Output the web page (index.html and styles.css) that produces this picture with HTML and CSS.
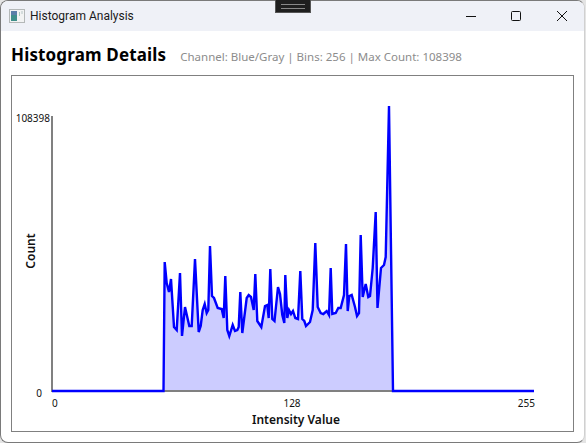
FILE: index.html
```html
<!DOCTYPE html>
<html lang="en">
<head>
  <meta charset="UTF-8">
  <title>Histogram Analysis</title>
  <link rel="stylesheet" href="styles.css">
</head>
<body>
  <div class="window">
    <div class="titlebar">
      <svg class="app-icon" width="16" height="14" viewBox="0 0 16 14">
        <rect x="0.5" y="0.5" width="15" height="13" fill="#f2f3f3" stroke="#b4b8b8"/>
        <rect x="2" y="2" width="6" height="10" fill="#3f8f8a"/>
        <rect x="2" y="2" width="6" height="4" fill="#5a7fa8"/>
        <rect x="10" y="3" width="1" height="4" fill="#a8c8b8"/>
        <rect x="12" y="2" width="2" height="3" fill="#d4dcdc"/>
      </svg>
      <span class="title">Histogram Analysis</span>
      <div class="controls">
        <button class="ctl">
          <svg width="12" height="12" viewBox="0 0 12 12"><path d="M1 6.5h10" stroke="#111" fill="none"/></svg>
        </button>
        <button class="ctl">
          <svg width="12" height="12" viewBox="0 0 12 12"><rect x="1.5" y="1.5" width="9" height="9" rx="1" stroke="#111" fill="none"/></svg>
        </button>
        <button class="ctl">
          <svg width="12" height="12" viewBox="0 0 12 12"><path d="M1 1l10 10M11 1L1 11" stroke="#111" fill="none"/></svg>
        </button>
      </div>
    </div>
    <div class="content">
      <div class="heading">
        <h1>Histogram Details</h1>
        <span class="info">Channel: Blue/Gray | Bins: 256 | Max Count: 108398</span>
      </div>
      <div class="chart-frame">
        <svg class="chart" viewBox="12 76 561 355" width="561" height="355">
          <polygon class="area" points="163.5,391 164.7,262 166.7,283 169,292 171,279 174,327 176.7,330 180,273 182,336 185,307 189.3,326 191.7,326 195,259 198.7,332 200.7,326 202.7,310 204.7,304 206.7,313 208.3,310 210,246 212,296 214,298 217.7,308 221.7,309 223.7,318 225.3,276 227.3,330 229.3,336 232.7,325 235,331 237.3,330 238.7,327 240.3,292 242.3,333 246.7,298 248.7,295 251,297 253.7,310 255.3,274 257.3,321 261.3,327 265,306 267.3,305 268.7,318 270.3,269 272.3,319 274.5,321 278,287 280,294 282.3,315 284.3,323 285.3,275 287.3,318 289,310 291,314 293,311 295.3,318 298,319 300.3,271 302.3,319 304.3,321 306,326 310,322 312.7,310 315.3,243 317.7,307 320.7,313 323.3,314 326.7,311 329,315 330.7,268 332.3,314 335.7,313 338.3,308 340.7,308 344,295 346,244 347.7,311 349.3,296 351.7,295 355,307 357,316 359,313 360.7,235 362.7,297 365.7,284 368.3,297 370,296 372.7,268 375.7,212 377.5,308 381,268 384,265 385.7,257 389,106 393,391"/>
          <path class="axis" d="M52 116V391H534"/>
          <polyline class="line" points="52,391 163.5,391 164.7,262 166.7,283 169,292 171,279 174,327 176.7,330 180,273 182,336 185,307 189.3,326 191.7,326 195,259 198.7,332 200.7,326 202.7,310 204.7,304 206.7,313 208.3,310 210,246 212,296 214,298 217.7,308 221.7,309 223.7,318 225.3,276 227.3,330 229.3,336 232.7,325 235,331 237.3,330 238.7,327 240.3,292 242.3,333 246.7,298 248.7,295 251,297 253.7,310 255.3,274 257.3,321 261.3,327 265,306 267.3,305 268.7,318 270.3,269 272.3,319 274.5,321 278,287 280,294 282.3,315 284.3,323 285.3,275 287.3,318 289,310 291,314 293,311 295.3,318 298,319 300.3,271 302.3,319 304.3,321 306,326 310,322 312.7,310 315.3,243 317.7,307 320.7,313 323.3,314 326.7,311 329,315 330.7,268 332.3,314 335.7,313 338.3,308 340.7,308 344,295 346,244 347.7,311 349.3,296 351.7,295 355,307 357,316 359,313 360.7,235 362.7,297 365.7,284 368.3,297 370,296 372.7,268 375.7,212 377.5,308 381,268 384,265 385.7,257 389,106 393,391 534,391"/>
          <text class="tick" x="50" y="122" text-anchor="end">108398</text>
          <text class="tick" x="42" y="397" text-anchor="end">0</text>
          <text class="tick" x="52" y="407">0</text>
          <text class="tick" x="292" y="407" text-anchor="middle">128</text>
          <text class="tick" x="535" y="407" text-anchor="end">255</text>
          <text class="axis-label" x="296" y="424" text-anchor="middle">Intensity Value</text>
          <text class="axis-label" x="0" y="0" text-anchor="middle" transform="translate(35 251) rotate(-90)">Count</text>
        </svg>
      </div>
    </div>
  </div>
  <div class="snap-handle"></div>
</body>
</html>
```

FILE: styles.css
```css
html, body {
  margin: 0;
  height: 100%;
}
body {
  background-color: #e4e4e4;
  font-family: "Open Sans", "Noto Sans", sans-serif;
}
.window {
  display: flex;
  flex-direction: column;
  box-sizing: border-box;
  width: 585px;
  height: 443px;
  border: 1px solid #7a7a7a;
  border-right-color: #d0d0d0;
  border-radius: 8px;
  overflow: hidden;
  background-color: #fff;
}
/* title bar */
.titlebar {
  display: flex;
  align-items: center;
  flex: none;
  height: 30px;
  padding-left: 8px;
  background-color: #eff1f7;
}
.app-icon {
  flex: none;
}
.title {
  margin-left: 5px;
  font-family: "Roboto", sans-serif;
  font-size: 12px;
  color: #1a1a1a;
}
.controls {
  display: flex;
  margin-left: auto;
  margin-bottom: 1px;
}
.ctl {
  display: flex;
  align-items: center;
  justify-content: center;
  width: 45px;
  height: 30px;
  padding: 0;
  border: none;
  background: none;
}
.ctl:nth-child(2) {
  margin-right: 1px;
}
/* body of the window */
.content {
  display: flex;
  flex-direction: column;
  flex: 1;
  padding: 0 10px 10px 10px;
}
.heading {
  display: flex;
  align-items: baseline;
  flex: none;
  height: 44px;
  padding-top: 12px;
  box-sizing: border-box;
}
h1 {
  margin: 0;
  font-family: "Noto Sans", sans-serif;
  font-size: 17px;
  font-weight: 700;
  letter-spacing: 0.15px;
  color: #000;
}
.info {
  margin-left: 14px;
  font-family: "Noto Sans", sans-serif;
  font-size: 11.5px;
  color: #8c8c8c;
}
.chart-frame {
  flex: 1;
  border: 1px solid #808080;
}
.chart {
  display: block;
}
.area {
  fill: #ccccff;
}
.axis {
  fill: none;
  stroke: #808080;
  stroke-width: 2;
}
.line {
  fill: none;
  stroke: #0000ff;
  stroke-width: 2.4;
}
.tick {
  font-family: "Noto Sans", sans-serif;
  font-size: 10px;
  fill: #111;
}
.axis-label {
  font-family: "Noto Sans", sans-serif;
  font-size: 12px;
  font-weight: 600;
  fill: #111;
}
/* snap handle lying over the top edge */
.snap-handle {
  position: absolute;
  top: 0;
  left: 275px;
  box-sizing: border-box;
  width: 36px;
  height: 13px;
  border: 1px solid #555;
  border-top: none;
  background-color: #1f1f1f;
}
.snap-handle::after {
  content: "";
  position: absolute;
  left: 5px;
  right: 5px;
  top: 4px;
  height: 3px;
  border-top: 1px solid #888;
  border-bottom: 1px solid #888;
}
```
